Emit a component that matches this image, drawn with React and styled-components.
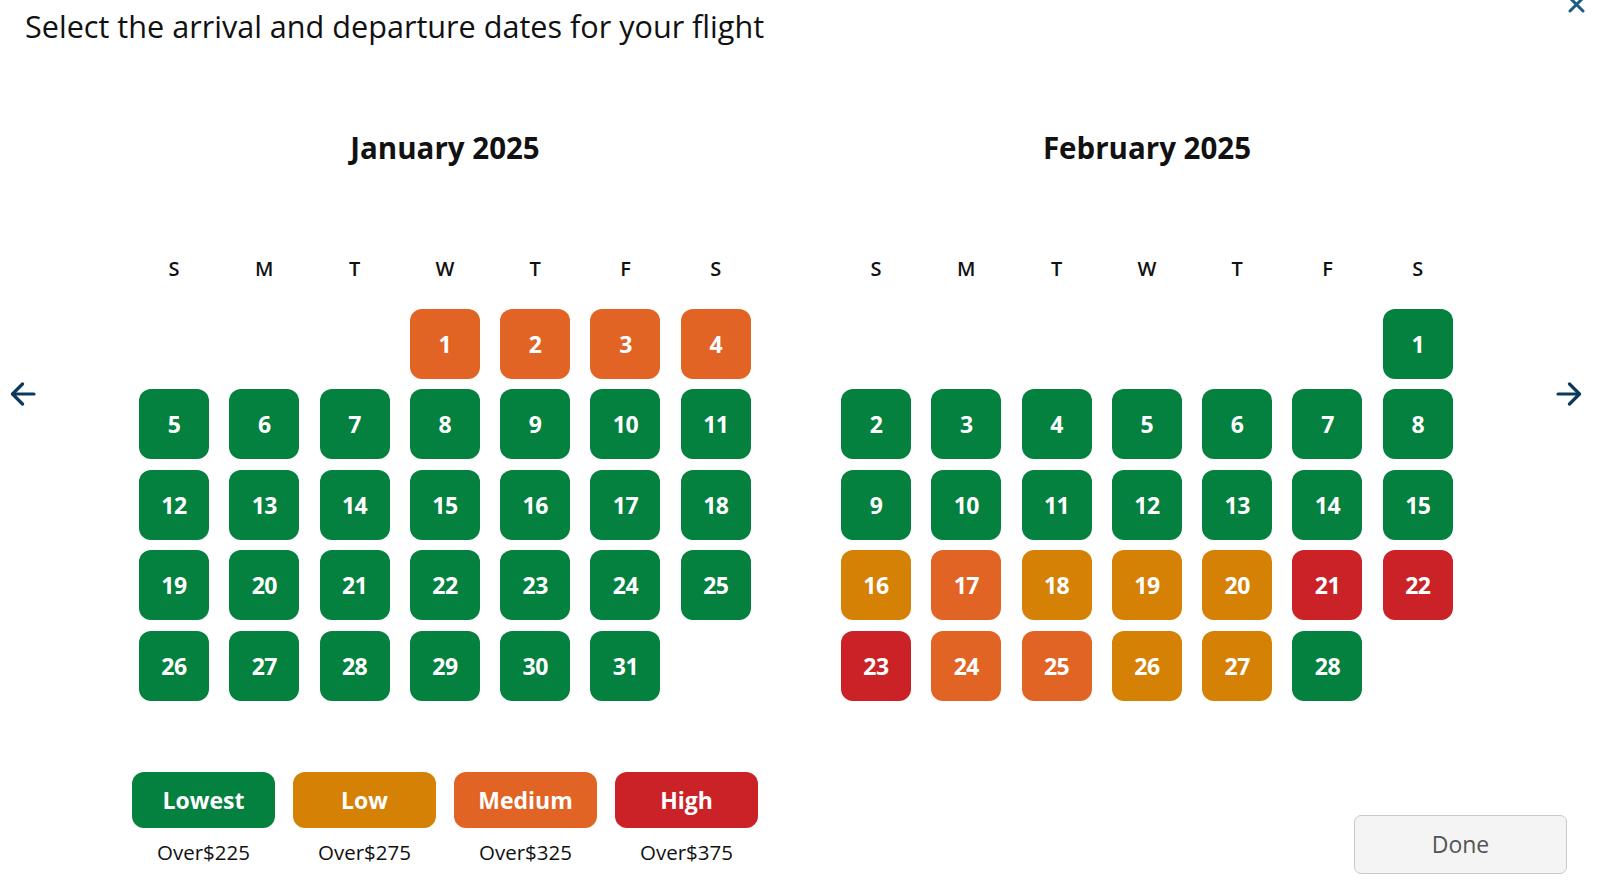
import React from 'react';
import styled, { createGlobalStyle } from 'styled-components';

const TIERS = {
    lowest: { label: 'Lowest', color: '#04803f', note: 'Over$225' },
    low: { label: 'Low', color: '#d58106', note: 'Over$275' },
    medium: { label: 'Medium', color: '#e16425', note: 'Over$325' },
    high: { label: 'High', color: '#cb2228', note: 'Over$375' },
};

const WEEKDAYS = ['S', 'M', 'T', 'W', 'T', 'F', 'S'];

// fare tier for each day, indexed from the 1st
const january = {
    title: 'January 2025',
    startDay: 3,
    days: [
        'medium', 'medium', 'medium', 'medium',
        ...Array(27).fill('lowest'),
    ],
};

const february = {
    title: 'February 2025',
    startDay: 6,
    days: [
        ...Array(15).fill('lowest'),
        'low', 'medium', 'low', 'low', 'low', 'high', 'high',
        'high', 'medium', 'medium', 'low', 'low', 'lowest',
    ],
};

function ArrowIcon({ dir }) {
    const flip = dir === 'right' ? 'scale(-1,1) translate(-26,0)' : undefined;
    return (
        <svg width="26" height="24" viewBox="0 0 26 24" fill="none">
            <g transform={flip} stroke="#0d3a5c" strokeWidth="3.2" strokeLinecap="round" strokeLinejoin="round">
                <path d="M2.5 12H24" />
                <path d="M12.5 2L2.5 12L12.5 22" />
            </g>
        </svg>
    );
}

function Month({ data }) {
    return (
        <MonthBlock>
            <MonthTitle>{data.title}</MonthTitle>
            <Weekdays>
                {WEEKDAYS.map((d, i) => <Weekday key={i}>{d}</Weekday>)}
            </Weekdays>
            <Days>
                {data.days.map((tier, i) => (
                    <DayCell
                        key={i}
                        $tier={tier}
                        style={i === 0 ? { gridColumnStart: data.startDay + 1 } : undefined}
                    >
                        {i + 1}
                    </DayCell>
                ))}
            </Days>
        </MonthBlock>
    );
}

export default function App() {
    return (
        <Page>
            <GlobalStyle />
            <Title>Select the arrival and departure dates for your flight</Title>
            <CloseButton aria-label="Close">
                <svg width="17" height="17" viewBox="0 0 17 17">
                    <path d="M2 2L15 15M15 2L2 15" stroke="#1c5d80" strokeWidth="3" strokeLinecap="round" />
                </svg>
            </CloseButton>
            <Main>
                <NavButton aria-label="Previous month"><ArrowIcon dir="left" /></NavButton>
                <Months>
                    <Month data={january} />
                    <Month data={february} />
                </Months>
                <NavButton aria-label="Next month"><ArrowIcon dir="right" /></NavButton>
            </Main>
            <Footer>
                <Legend>
                    {Object.keys(TIERS).map(key => (
                        <LegendItem key={key}>
                            <LegendChip $tier={key}>{TIERS[key].label}</LegendChip>
                            <LegendNote>{TIERS[key].note}</LegendNote>
                        </LegendItem>
                    ))}
                </Legend>
                <DoneButton>Done</DoneButton>
            </Footer>
        </Page>
    );
}

const GlobalStyle = createGlobalStyle`
    body{
        margin: 0;
        background: #fff;
    }
    *{ box-sizing: border-box; }
`

const Page = styled.div`
    position: relative;
    width: 1600px;
    height: 893px;
    overflow: hidden;
    background: #fff;
    font-family: "Open Sans", "Noto Sans", sans-serif;
    color: #111;
`

const Title = styled.h1`
    margin: 0;
    padding: 6px 0 0 25px;
    height: 46px;
    font-size: 30.6px;
    line-height: 40px;
    font-weight: 400;
`

const CloseButton = styled.button`
    position: absolute;
    top: -4px;
    right: 15px;
    padding: 0;
    border: none;
    background: transparent;
    display: flex;
`

const Main = styled.div`
    display: flex;
    justify-content: space-between;
    align-items: flex-start;
    padding: 84px 18px 0 10px;
`

const NavButton = styled.button`
    margin-top: 252px;
    padding: 0;
    border: none;
    background: transparent;
    display: flex;
`

const Months = styled.div`
    display: flex;
    gap: 90px;
`

const MonthBlock = styled.section`
    width: 612px;
    display: flex;
    flex-direction: column;
`

const MonthTitle = styled.h2`
    margin: 0;
    text-align: center;
    font-size: 29.5px;
    line-height: 36px;
    font-weight: 700;
`

const Weekdays = styled.div`
    margin-top: 91px;
    display: grid;
    grid-template-columns: repeat(7, 70px);
    column-gap: 20.3px;
`

const Weekday = styled.span`
    text-align: center;
    font-size: 20px;
    line-height: 24px;
    font-weight: 600;
`

const Days = styled.div`
    margin-top: 28px;
    display: grid;
    grid-template-columns: repeat(7, 70px);
    grid-auto-rows: 70px;
    column-gap: 20.3px;
    row-gap: 10.4px;
`

const DayCell = styled.div`
    display: flex;
    justify-content: center;
    align-items: center;
    border-radius: 12px;
    background: ${p => TIERS[p.$tier].color};
    color: #fff;
    font-size: 23px;
    font-weight: 700;
    letter-spacing: -0.5px;
`

const Footer = styled.div`
    display: flex;
    align-items: flex-start;
    margin-top: 71px;
    padding: 0 33px 0 132px;
`

const Legend = styled.div`
    display: flex;
    gap: 18px;
`

const LegendItem = styled.div`
    display: flex;
    flex-direction: column;
    align-items: center;
`

const LegendChip = styled.div`
    width: 143px;
    height: 56px;
    border-radius: 12px;
    background: ${p => TIERS[p.$tier].color};
    color: #fff;
    display: flex;
    justify-content: center;
    align-items: center;
    font-size: 23px;
    font-weight: 700;
`

const LegendNote = styled.div`
    margin-top: 10px;
    font-size: 20.5px;
    line-height: 28px;
`

const DoneButton = styled.button`
    margin-left: auto;
    margin-top: 43px;
    width: 213px;
    height: 59px;
    border: 1.5px solid #c9c9c9;
    border-radius: 7px;
    background: #f4f4f4;
    color: #555;
    font-family: inherit;
    font-size: 23px;
`
